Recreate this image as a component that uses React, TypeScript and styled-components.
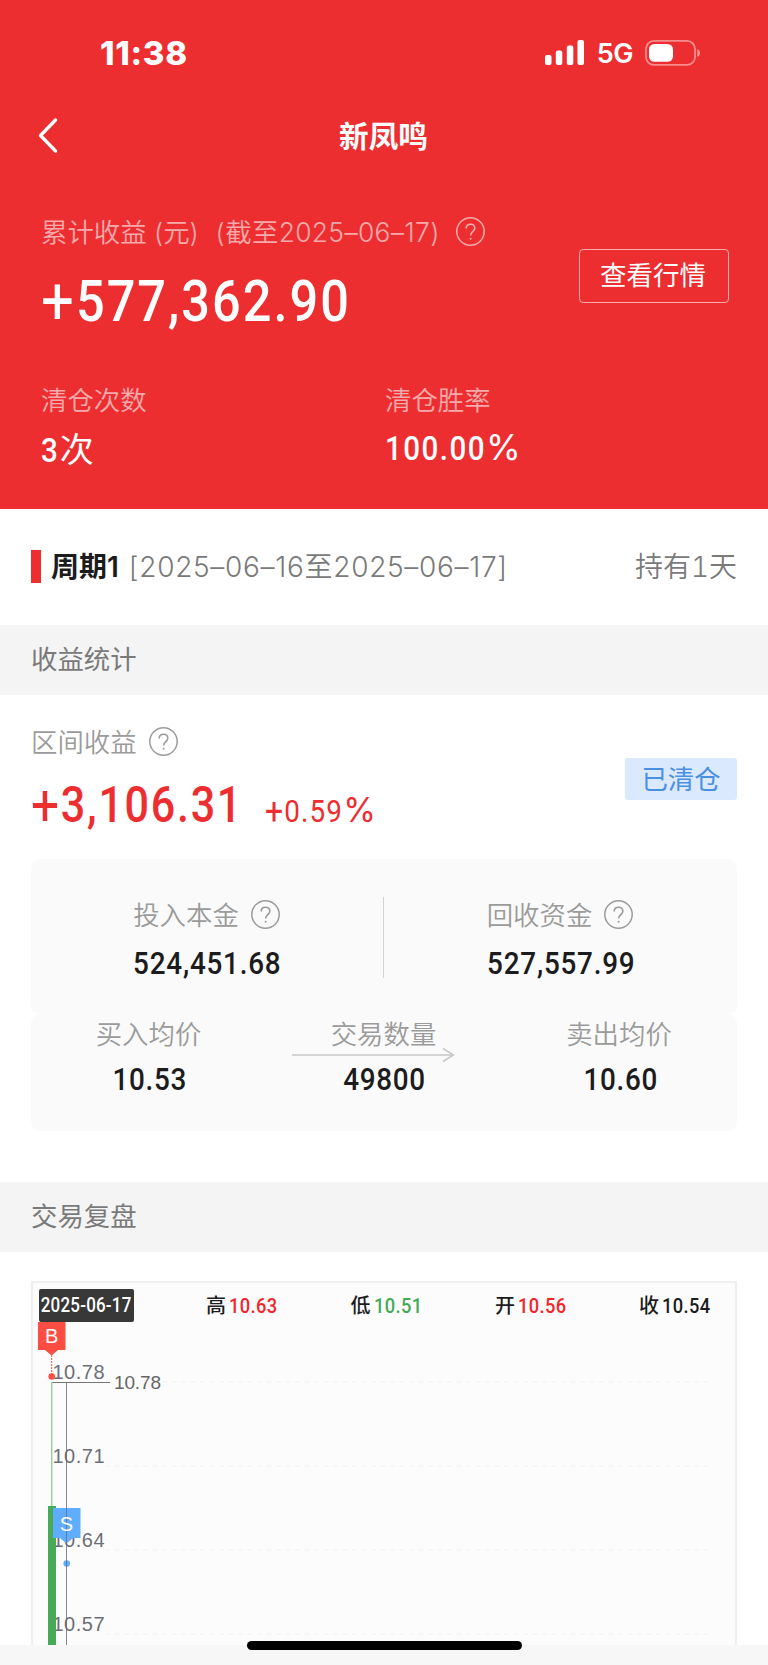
import React from "react";
import styled, { createGlobalStyle } from "styled-components";

const Global = createGlobalStyle`
  * { box-sizing: border-box; }
  body { margin: 0; background: #fff; font-family: Inter, "Noto Sans CJK SC", sans-serif; color: #1c1c1e; }
`;

const DIN = `Roboto, "Noto Sans CJK SC", sans-serif`;

const Page = styled.div`
  width: 768px;
  height: 1665px;
  overflow: hidden;
  display: flex;
  flex-direction: column;
  background: #fff;
`;

/* Narrow, loosely spaced numerals */
const Din = styled.span<{ $origin?: string; $spacing?: number }>`
  display: inline-block;
  font-family: ${DIN};
  white-space: nowrap;
  letter-spacing: ${(p) => p.$spacing ?? 0.04}em;
  transform: scaleX(0.87);
  transform-origin: ${(p) => p.$origin ?? "left"} center;
`;

const Sign = styled.span`
  font-size: 1.15em;
  font-weight: 400;
  letter-spacing: 0.035em;
  vertical-align: -0.05em;
  line-height: 0;
`;

const Percent = styled.span`
  font-family: Inter, sans-serif;
  font-weight: 400;
  font-size: 1.04em;
  line-height: 0;
  display: inline-block;
  transform: scaleX(1.15);
  transform-origin: left center;
`;

const Hero = styled.header`
  height: 509px;
  flex: none;
  background: #ed2e31;
  color: #fff;
`;

const StatusBar = styled.div`
  height: 100px;
  padding: 6px 67px 0 100px;
  display: flex;
  align-items: center;
  justify-content: space-between;
`;

const Clock = styled.span`
  font-size: 33px;
  font-weight: 800;
  letter-spacing: 0.7px;
`;

const StatusIcons = styled.div`
  display: flex;
  align-items: center;
  gap: 12px;
`;

const Network = styled.span`
  padding-top: 1px;
  font-size: 27px;
  font-weight: 600;
  line-height: 32px;
  letter-spacing: -0.5px;
`;

const NavBar = styled.div`
  height: 72px;
  padding: 0 36px 0 35px;
  display: grid;
  grid-template-columns: 40px 1fr 40px;
  align-items: center;
`;

const Title = styled.h1`
  margin: 0;
  text-align: center;
  font-size: 29.6px;
  font-weight: 700;
  line-height: 44px;
`;

const Summary = styled.section`
  height: 210px;
  padding: 42px 39px 0 41px;
  display: flex;
  justify-content: space-between;
`;

const Label = styled.div<{ $tone?: string; $gap?: number }>`
  display: flex;
  align-items: center;
  gap: ${(p) => p.$gap ?? 12}px;
  height: 36px;
  font-size: 26.4px;
  font-weight: 350;
  line-height: 36px;
  white-space: pre;
  color: ${(p) => p.$tone ?? "#9b9b9b"};
`;

const AsOf = styled.span`
  margin-left: 2px;
  letter-spacing: 0.35px;
`;

const Total = styled.div`
  margin-top: 18px;
  font-size: 58px;
  font-weight: 500;
  line-height: 64px;
`;

const QuoteButton = styled.button`
  width: 150px;
  height: 54px;
  margin-top: 35px;
  padding: 0 2px 2px 0;
  border: 1px solid rgba(255, 255, 255, 0.6);
  border-radius: 4px;
  background: none;
  color: #fff;
  font: 400 26.5px/36px Inter, "Noto Sans CJK SC", sans-serif;
`;

const HeroStats = styled.div`
  padding: 0 41px;
  display: grid;
  grid-template-columns: 344px 1fr;
`;

const HeroValue = styled.div`
  margin-top: 8px;
  font-size: 34px;
  font-weight: 500;
  line-height: 44px;
`;

const Unit = styled.span`
  margin-left: -2px;
  font-family: "Noto Sans CJK SC", sans-serif;
  font-weight: 400;
`;

const Period = styled.section`
  height: 116px;
  flex: none;
  padding: 0 31px;
  display: flex;
  align-items: center;
  font-size: 28px;
  font-weight: 350;
  color: #7a7a7a;
`;

const Marker = styled.i`
  width: 10px;
  height: 33px;
  margin: 0 10px 2px 0;
  background: #ed2e31;
`;

const PeriodName = styled.strong`
  padding-bottom: 5px;
  font-weight: 600;
  color: #1c1c1e;
`;

const PeriodRange = styled.span`
  margin-left: 10px;
  padding-bottom: 5px;
  letter-spacing: 0.7px;
`;

const Holding = styled.span`
  margin-left: auto;
  padding-bottom: 4px;
  font-variant-numeric: tabular-nums;
`;

const SectionTitle = styled.h2`
  height: 70px;
  flex: none;
  margin: 0;
  padding: 0 31px;
  background: #f4f4f4;
  color: #7a7a7a;
  font-size: 26.4px;
  font-weight: 400;
  line-height: 68px;
`;

const Earnings = styled.section`
  height: 487px;
  flex: none;
  padding: 29px 31px 0;
`;

const EarningsHead = styled.div`
  height: 135px;
  display: flex;
  justify-content: space-between;
`;

const Gain = styled.div`
  margin-top: 14px;
  display: flex;
  align-items: baseline;
  line-height: 60px;
  color: #ed2e31;
`;

const GainValue = styled.span`
  width: 234px;
  font-size: 49.5px;
  font-weight: 500;
`;

const GainRate = styled.span`
  font-size: 32px;
  font-weight: 400;
`;

const StateTag = styled.span`
  width: 112px;
  height: 42px;
  margin-top: 34px;
  border-radius: 3px;
  background: #dbe9ff;
  color: #4a90e2;
  font-size: 26.4px;
  font-weight: 400;
  line-height: 42px;
  text-align: center;
`;

const Card = styled.div<{ $height: number; $top: number }>`
  position: relative;
  height: ${(p) => p.$height}px;
  padding-top: ${(p) => p.$top}px;
  display: flex;
  align-items: flex-start;
  border-radius: 9px;
  background: #fafafa;
`;

const Column = styled.div<{ $width: number }>`
  width: ${(p) => p.$width}px;
  display: flex;
  flex-direction: column;
  align-items: center;
`;

const Divider = styled.i`
  width: 1px;
  height: 81px;
  background: #d4d4d4;
`;

const Figure = styled.div<{ $gap: number; $nudge?: number }>`
  margin-top: ${(p) => p.$gap}px;
  padding-left: ${(p) => p.$nudge ?? 1}px;
  font-size: 32px;
  font-weight: 500;
  line-height: 40px;
  color: #1c1c1e;
`;

const Arrow = styled.svg`
  position: absolute;
  left: 261px;
  top: 33px;
`;

const Review = styled.section`
  height: 392.5px;
  flex: none;
  padding: 29px 31px 0;
`;

const ChartBox = styled.div`
  height: 363.5px;
  border: 2px solid #efefef;
  border-bottom: 0;
  background: #fcfcfc;
  overflow: hidden;
`;

const Quotes = styled.div`
  height: 39px;
  padding: 6px 6px 0;
  display: grid;
  grid-template-columns: 167px 144.5px 144.5px 144px 1fr;
`;

const DateChip = styled.span`
  width: 95px;
  height: 33px;
  border-radius: 2px;
  background: #383838;
  color: #fff;
  display: flex;
  justify-content: center;
  font-size: 19.5px;
  font-weight: 500;
  line-height: 34px;
`;

const Quote = styled.span<{ $color: string }>`
  display: flex;
  gap: 3px;
  font-size: 21px;
  font-weight: 500;
  line-height: 34px;
  color: ${(p) => p.$color};
`;

const QuoteName = styled.span`
  font-size: 20px;
  color: #1c1c1e;
`;

const Plot = styled.svg`
  display: block;
`;

const HomeArea = styled.footer`
  flex: 1;
  background: #f7f7f7;
  display: flex;
  justify-content: center;
  align-items: flex-start;
`;

const HomeIndicator = styled.i`
  width: 275px;
  height: 9px;
  margin-top: -3.5px;
  border-radius: 5px;
  background: #000;
  z-index: 1;
`;

const HelpIcon = () => (
  <svg width="30" height="30" viewBox="0 0 30 30" fill="none" stroke="currentColor">
    <circle cx="14.500" cy="14.500" r="13.700" strokeWidth="1.500" />
    <path d="M10.200 11.500c0-2.500 1.800-4.300 4.300-4.300s4.300 1.600 4.300 4c0 3.200-4.200 3.700-4.200 7.300" strokeWidth="1.600" />
    <circle cx="14.600" cy="21.700" r="1" fill="currentColor" stroke="none" />
  </svg>
);

const SignalIcon = () => (
  <svg width="40" height="26" viewBox="0 0 40 26" fill="#fff">
    <rect x="0" y="15" width="6.500" height="10" rx="2" />
    <rect x="10.800" y="10.500" width="6.500" height="14.500" rx="2" />
    <rect x="21.800" y="5.500" width="6.500" height="19.500" rx="2" />
    <rect x="32.500" y="0" width="6.500" height="25" rx="2" />
  </svg>
);

const BatteryIcon = () => (
  <svg width="56" height="26" viewBox="0 0 56 26">
    <rect x="1" y="0.900" width="49" height="24" rx="8" fill="none" stroke="#fff" strokeOpacity="0.45" strokeWidth="1.800" />
    <rect x="4" y="4" width="24" height="17.800" rx="5.500" fill="#fff" />
    <path d="M52.300 9v8c1.600-.7 2.700-2.200 2.700-4s-1.100-3.300-2.700-4z" fill="#fff" fillOpacity="0.5" />
  </svg>
);

const BackIcon = () => (
  <svg width="24" height="38" viewBox="0 0 24 38" fill="none" stroke="#fff" strokeWidth="3.300" strokeLinecap="round" strokeLinejoin="round">
    <path d="M20.500 3L5.500 18.500l15 15.500" />
  </svg>
);

const quotes = [
  { name: "高", value: "10.63", color: "#f3252a" },
  { name: "低", value: "10.51", color: "#44a956" },
  { name: "开", value: "10.56", color: "#f3252a" },
  { name: "收", value: "10.54", color: "#1c1c1e" },
];

const gridLines = [
  { price: "10.78", y: 60 },
  { price: "10.71", y: 144 },
  { price: "10.64", y: 228 },
  { price: "10.57", y: 312 },
];

const PriceChart = () => (
  <Plot width="702" height="324" viewBox="0 0 702 324" fontFamily='"Liberation Sans", sans-serif'>
    {gridLines.map((g) => (
      <line key={g.price} x1="72" x2="678" y1={g.y} y2={g.y} stroke="#f1f1f1" strokeDasharray="5 4.500" />
    ))}
    <rect x="60" y="46" width="69" height="26" fill="#fcfcfc" />
    <g fill="#6e6e78" fontSize="20">
      {gridLines.map((g) => (
        <text key={g.price} x="19.500" y={g.y - 3.500} textLength="52">{g.price}</text>
      ))}
    </g>
    <path d="M18.500 60.500H77" stroke="#777" fill="none" />
    <text x="81" y="67" fontSize="19" fill="#666" textLength="47">10.78</text>
    <path d="M18.700 60v124" stroke="#97d1a1" strokeWidth="1.500" />
    <rect x="15" y="184" width="8" height="140" fill="#47aa57" />
    <g fill="#fe4d42">
      <path d="M5 -2h27.500v30H25l-6.500 5.500L12 28H5z" />
      <circle cx="18.700" cy="54.500" r="3.300" />
    </g>
    <path d="M18.700 33v20" stroke="#fe4d42" strokeDasharray="2 1" />
    <text x="18.700" y="21" fontSize="20" fill="#fff" textAnchor="middle">B</text>
    <g fill="#5eadff">
      <path d="M20 186h27.500v30H40l-6.500 5.500L27 216h-7z" />
      <circle cx="33.700" cy="241.500" r="3.300" />
    </g>
    <path d="M33.500 60v264" stroke="#666c75" strokeOpacity="0.8" />
    <text x="33.500" y="208.500" fontSize="20" fill="#fff" textAnchor="middle">S</text>
  </Plot>
);

export default function App() {
  return (
    <Page>
      <Global />
      <Hero>
        <StatusBar>
          <Clock>11:38</Clock>
          <StatusIcons>
            <SignalIcon />
            <Network>5G</Network>
            <BatteryIcon />
          </StatusIcons>
        </StatusBar>
        <NavBar>
          <BackIcon />
          <Title>新凤鸣</Title>
        </NavBar>
        <Summary>
          <div>
            <Label $tone="rgba(255,255,255,0.6)" $gap={16}>
              <span>{"累计收益 (元)  "}<AsOf>(截至2025–06–17)</AsOf></span>
              <HelpIcon />
            </Label>
            <Total><Din><Sign>+</Sign>577,362.90</Din></Total>
          </div>
          <QuoteButton>查看行情</QuoteButton>
        </Summary>
        <HeroStats>
          <div>
            <Label $tone="rgba(255,255,255,0.6)">清仓次数</Label>
            <HeroValue><Din>3</Din><Unit>次</Unit></HeroValue>
          </div>
          <div>
            <Label $tone="rgba(255,255,255,0.6)">清仓胜率</Label>
            <HeroValue><Din $spacing={0.05}>100.00<Percent>%</Percent></Din></HeroValue>
          </div>
        </HeroStats>
      </Hero>
      <Period>
        <Marker />
        <PeriodName>周期1</PeriodName>
        <PeriodRange>[2025–06–16至2025–06–17]</PeriodRange>
        <Holding>持有1天</Holding>
      </Period>
      <SectionTitle>收益统计</SectionTitle>
      <Earnings>
        <EarningsHead>
          <div>
            <Label>区间收益<HelpIcon /></Label>
            <Gain>
              <GainValue><Din><Sign>+</Sign>3,106.31</Din></GainValue>
              <GainRate><Din><Sign>+</Sign>0.59<Percent>%</Percent></Din></GainRate>
            </Gain>
          </div>
          <StateTag>已清仓</StateTag>
        </EarningsHead>
        <Card $height={155} $top={38}>
          <Column $width={352}>
            <Label>投入本金<HelpIcon /></Label>
            <Figure $gap={10}><Din $origin="center" $spacing={0.028}>524,451.68</Din></Figure>
          </Column>
          <Divider />
          <Column $width={353}>
            <Label>回收资金<HelpIcon /></Label>
            <Figure $gap={10}><Din $origin="center" $spacing={0.028}>527,557.99</Din></Figure>
          </Column>
        </Card>
        <Card $height={117} $top={2}>
          <Column $width={235}>
            <Label>买入均价</Label>
            <Figure $gap={7} $nudge={3}><Din $origin="center" $spacing={0.025}>10.53</Din></Figure>
          </Column>
          <Column $width={235}>
            <Label>交易数量</Label>
            <Figure $gap={7}><Din $origin="center" $spacing={0.025}>49800</Din></Figure>
          </Column>
          <Column $width={236}>
            <Label>卖出均价</Label>
            <Figure $gap={7} $nudge={3}><Din $origin="center" $spacing={0.025}>10.60</Din></Figure>
          </Column>
          <Arrow width="164" height="16" viewBox="0 0 164 16" fill="none" stroke="#c8c8c8" strokeWidth="1.500">
            <path d="M0 8h161M151 1.500L161.500 8 151 14.500" />
          </Arrow>
        </Card>
      </Earnings>
      <SectionTitle>交易复盘</SectionTitle>
      <Review>
        <ChartBox>
          <Quotes>
            <DateChip><Din $origin="center" $spacing={0.012}>2025-06-17</Din></DateChip>
            {quotes.map((q) => (
              <Quote key={q.name} $color={q.color}>
                <QuoteName>{q.name}</QuoteName>
                <Din $spacing={0.02}>{q.value}</Din>
              </Quote>
            ))}
          </Quotes>
          <PriceChart />
        </ChartBox>
      </Review>
      <HomeArea>
        <HomeIndicator />
      </HomeArea>
    </Page>
  );
}
